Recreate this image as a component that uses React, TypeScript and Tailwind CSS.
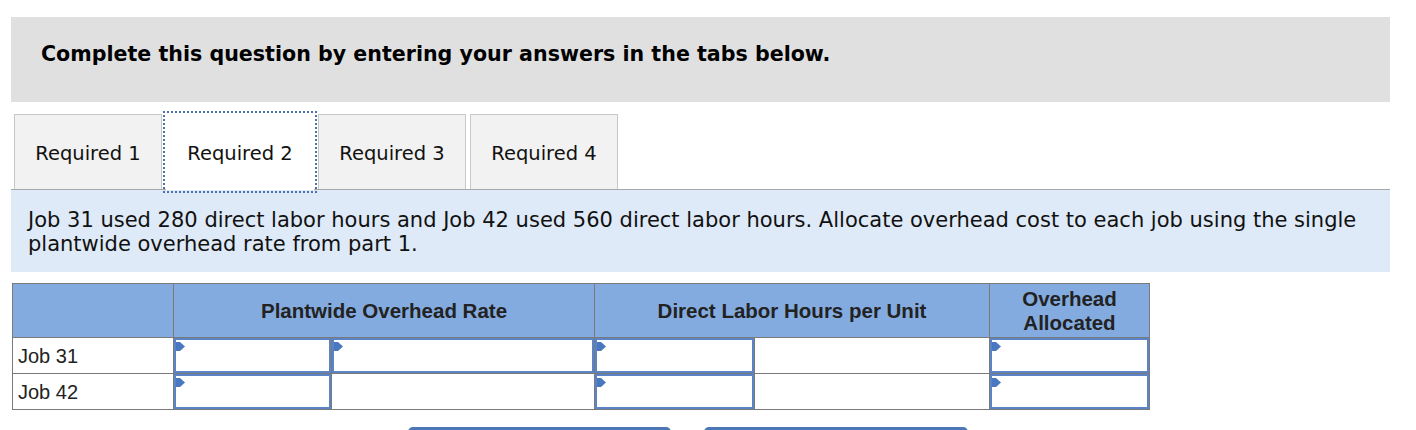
import React from "react";

const verdana = { fontFamily: '"DejaVu Sans", Verdana, sans-serif' };
const arial = { fontFamily: '"Liberation Sans", Arial, sans-serif' };

function Flag() {
  return (
    <svg
      className="absolute left-0 top-[2px]"
      width="9"
      height="9"
      viewBox="0 0 9 9"
    >
      <polygon points="0,0 4,0 9,4.5 4,9 0,9" fill="#4a78c0" />
    </svg>
  );
}

function InputCell() {
  return (
    <td className="p-0 border border-[#7a7a7a] h-[36px]">
      <div className="relative h-[35px] w-full border-2 border-[#5a84c6] bg-white">
        <Flag />
      </div>
    </td>
  );
}

function EmptyCell() {
  return <td className="p-0 border border-[#7a7a7a] h-[36px] bg-white"></td>;
}

export default function App() {
  const tabs = ["Required 1", "Required 2", "Required 3", "Required 4"];
  return (
    <div className="w-[1416px] h-[430px] overflow-hidden bg-white text-[#111]">
      <div className="ml-[11px] mt-[17px] h-[85px] w-[1379px] bg-[#e0e0e0] pl-[30px] pt-[25px]">
        <div
          className="text-[20.6px] font-bold leading-[24px] text-black"
          style={verdana}
        >
          Complete this question by entering your answers in the tabs below.
        </div>
      </div>

      <div className="ml-[11px] mt-[12px] flex w-[1379px] gap-[4px] border-b border-[#a8a8a8] pl-[3px]">
        {tabs.map((t, i) =>
          i === 1 ? (
            <div
              key={t}
              className="relative z-10 -mb-px flex h-[76px] w-[148px] items-center justify-center bg-white pt-[4px] pb-px text-[19.5px] outline-2 outline-dotted outline-offset-1 outline-[#4a72b0]"
              style={verdana}
            >
              {t}
            </div>
          ) : (
            <div
              key={t}
              className="flex h-[75px] w-[148px] items-center justify-center border border-b-0 border-[#c8c8c8] bg-[#f2f2f2] pt-[4px] text-[19.5px]"
              style={verdana}
            >
              {t}
            </div>
          )
        )}
      </div>

      <div
        className="ml-[11px] w-[1379px] bg-[#deeaf7] pl-[17px] pr-[12px] pt-[18px] pb-[16px] text-[21px] leading-[24px] text-[#111]"
        style={verdana}
      >
        Job 31 used 280 direct labor hours and Job 42 used 560 direct labor hours. Allocate overhead cost to each job using the single plantwide overhead rate from part 1.
      </div>

      <table
        className="ml-[12px] mt-[11px] w-[1137px] table-fixed border-collapse"
        style={arial}
      >
        <colgroup>
          <col className="w-[161px]" />
          <col className="w-[158px]" />
          <col className="w-[263px]" />
          <col className="w-[160px]" />
          <col className="w-[235px]" />
          <col className="w-[160px]" />
        </colgroup>
        <thead>
          <tr className="h-[54px] bg-[#84abdf]">
            <th className="border border-[#7a7a7a]"></th>
            <th
              colSpan={2}
              className="border border-[#7a7a7a] text-center text-[20.5px] font-bold leading-[24px] text-[#222]"
            >
              Plantwide Overhead Rate
            </th>
            <th
              colSpan={2}
              className="border border-[#7a7a7a] text-center text-[20.5px] font-bold leading-[24px] text-[#222]"
            >
              Direct Labor Hours per Unit
            </th>
            <th className="border border-[#7a7a7a] text-center text-[20.5px] font-bold leading-[24px] text-[#222]">
              Overhead
              <br />
              Allocated
            </th>
          </tr>
        </thead>
        <tbody>
          <tr>
            <td className="h-[36px] border border-[#7a7a7a] pl-[5px] text-[20px] text-[#222]">
              Job 31
            </td>
            <InputCell />
            <InputCell />
            <InputCell />
            <EmptyCell />
            <InputCell />
          </tr>
          <tr>
            <td className="h-[36px] border border-[#7a7a7a] pl-[5px] text-[20px] text-[#222]">
              Job 42
            </td>
            <InputCell />
            <EmptyCell />
            <InputCell />
            <EmptyCell />
            <InputCell />
          </tr>
        </tbody>
      </table>

      <div className="ml-[408px] mt-[17px] flex gap-[33px]">
        <div className="h-[40px] w-[263px] rounded-[5px] bg-[#4b77b5]"></div>
        <div className="h-[40px] w-[264px] rounded-[5px] bg-[#4b77b5]"></div>
      </div>
    </div>
  );
}
